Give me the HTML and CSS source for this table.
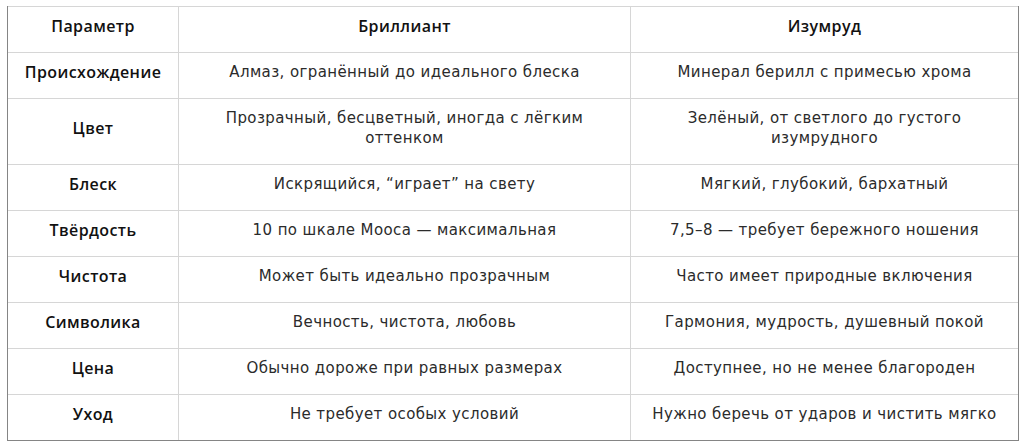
FILE: index.html
```html
<!DOCTYPE html>
<html lang="ru">
<head>
<meta charset="utf-8">
<link rel="stylesheet" href="styles.css">
</head>
<body>
<div class="wrap">
<table class="cmp">
<colgroup><col class="c1"><col class="c2"><col class="c3"></colgroup>
<thead>
<tr><th>Параметр</th><th>Бриллиант</th><th>Изумруд</th></tr>
</thead>
<tbody>
<tr><td class="lab">Происхождение</td><td>Алмаз, огранённый до идеального блеска</td><td>Минерал берилл с примесью хрома</td></tr>
<tr><td class="lab">Цвет</td><td>Прозрачный, бесцветный, иногда с лёгким оттенком</td><td>Зелёный, от светлого до густого изумрудного</td></tr>
<tr><td class="lab">Блеск</td><td>Искрящийся, “играет” на свету</td><td>Мягкий, глубокий, бархатный</td></tr>
<tr><td class="lab">Твёрдость</td><td>10 по шкале Мооса — максимальная</td><td>7,5–8 — требует бережного ношения</td></tr>
<tr><td class="lab">Чистота</td><td>Может быть идеально прозрачным</td><td>Часто имеет природные включения</td></tr>
<tr><td class="lab">Символика</td><td>Вечность, чистота, любовь</td><td>Гармония, мудрость, душевный покой</td></tr>
<tr><td class="lab">Цена</td><td>Обычно дороже при равных размерах</td><td>Доступнее, но не менее благороден</td></tr>
<tr><td class="lab">Уход</td><td>Не требует особых условий</td><td>Нужно беречь от ударов и чистить мягко</td></tr>
</tbody>
</table>
</div>
</body>
</html>
```

FILE: styles.css
```css
html, body {
  background: #ffffff;
}
body {
  margin: 6px 0 0 7px;
  font-family: "DejaVu Sans", "Noto Sans", sans-serif;
  font-size: 15px;
  letter-spacing: 0.4px;
  color: #2b2b2b;
}
.wrap {
  width: 1010px;
  border-left: 1px solid #858585;
  border-right: 1px solid #858585;
  border-bottom: 1px solid #858585;
}
.cmp {
  width: 1010px;
  table-layout: fixed;
  border-collapse: separate;
  border-spacing: 0;
}
.c1 { width: 170px; }
.c2 { width: 452px; }
.c3 { width: 388px; }
.cmp th,
.cmp td {
  border-top: 1px solid #d6d6d6;
  border-left: 1px solid #d6d6d6;
  padding: 9px 15px 16px;
  line-height: 20px;
  text-align: center;
  vertical-align: middle;
  box-sizing: border-box;
}
.cmp th:first-child,
.cmp td:first-child {
  border-left: none;
}
.cmp th,
.cmp td.lab {
  font-family: "Open Sans", sans-serif;
  font-size: 16px;
  font-weight: 600;
  color: #111;
}
```
